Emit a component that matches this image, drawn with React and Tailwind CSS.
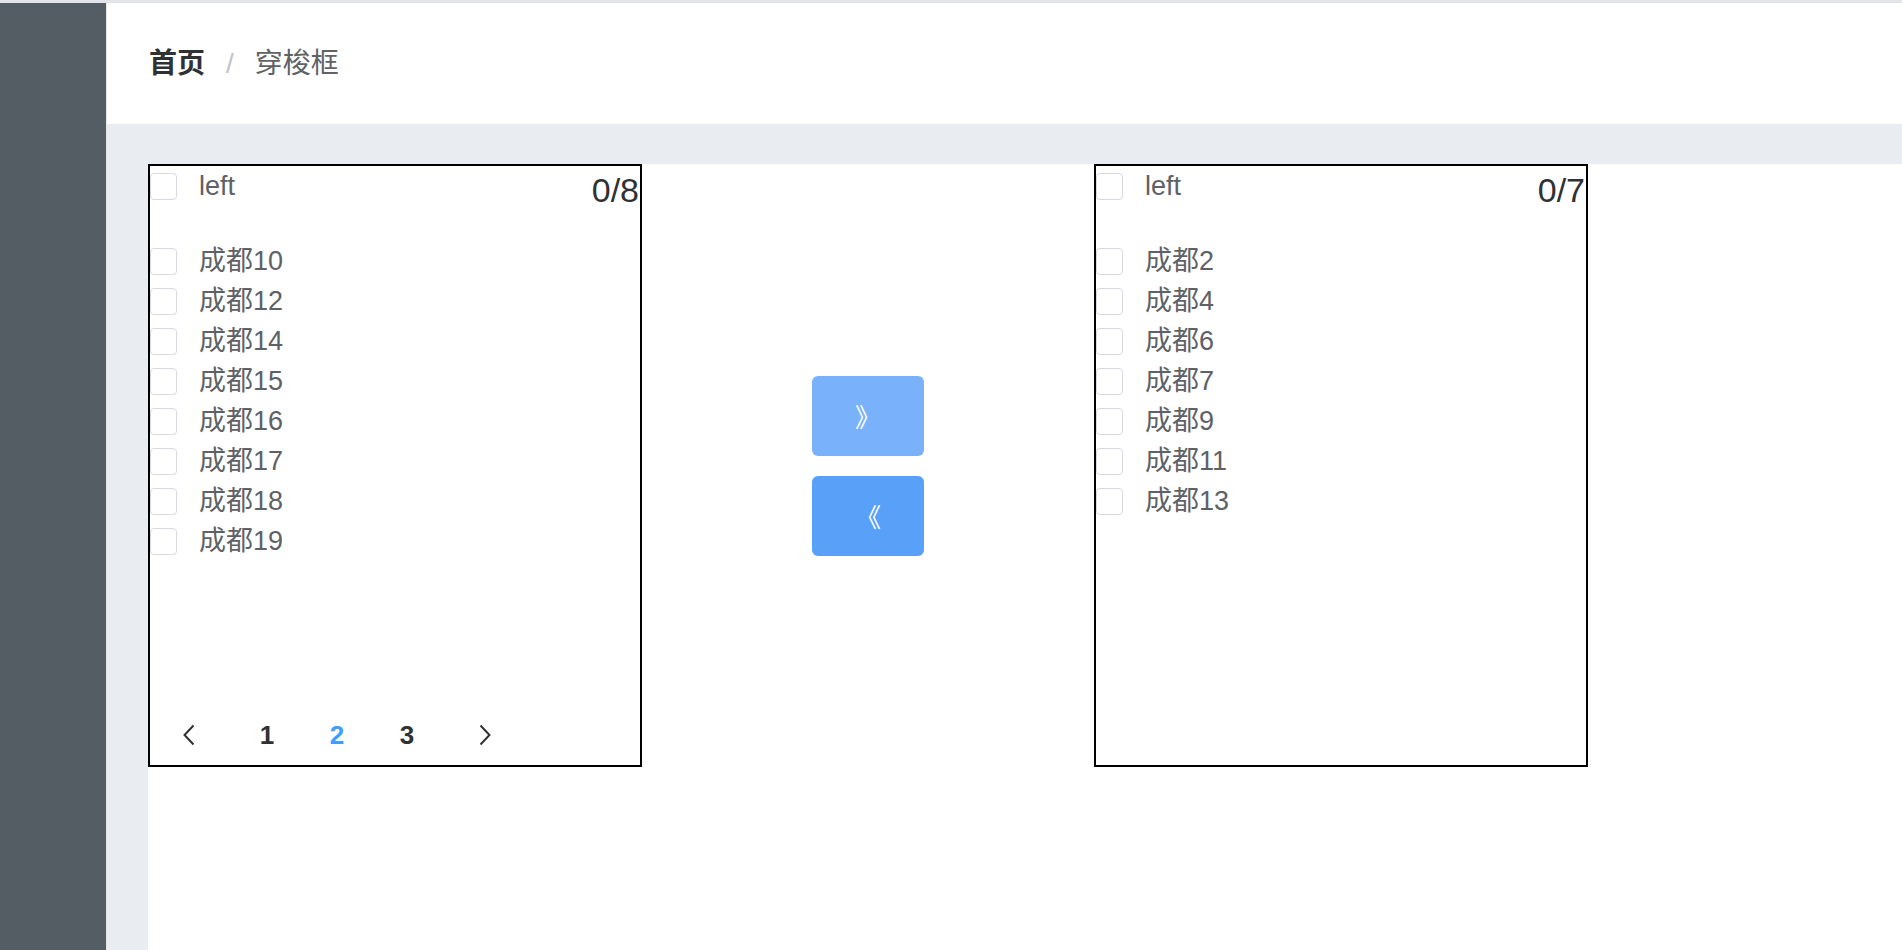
import React from "react";

const leftItems = ["成都10", "成都12", "成都14", "成都15", "成都16", "成都17", "成都18", "成都19"];
const rightItems = ["成都2", "成都4", "成都6", "成都7", "成都9", "成都11", "成都13"];

function Box() {
  return <span className="block w-[27px] h-[27px] shrink-0 rounded-[4px] border border-[#d6d9e0] bg-white" />;
}

function Chevron({ dir }) {
  return (
    <svg width="12" height="22" viewBox="0 0 12 22" fill="none">
      <polyline
        points={dir === "left" ? "10.5,1.5 1.5,11 10.5,20.5" : "1.5,1.5 10.5,11 1.5,20.5"}
        stroke="#303133"
        strokeWidth="2"
      />
    </svg>
  );
}

function Panel({ items, count, pager }) {
  return (
    <div className="w-[494px] h-[603px] shrink-0 border-2 border-black flex flex-col">
      {/* header */}
      <div className="h-[40px] flex items-center">
        <Box />
        <span className="ml-[22px] text-[27px] text-[#5e6166] leading-none">left</span>
        <span className="ml-auto pr-[1px] pt-[8px] text-[34px] text-[#303133] leading-none">{count}</span>
      </div>

      <div className="mt-[35px] flex flex-col">
        {items.map((item, i) => (
          <div key={i} className="h-[40px] flex items-center">
            <Box />
            <span className="ml-[22px] text-[27px] text-[#5e6166] leading-none">{item}</span>
          </div>
        ))}
      </div>

      {pager && (
        <div className="mt-auto mb-[10px] h-[40px] pl-[4px] flex items-center">
          <div className="w-[70px] flex justify-center">
            <Chevron dir="left" />
          </div>
          <div className="w-[70px] ml-[8px] text-center text-[26px] font-bold text-[#303133]">1</div>
          <div className="w-[70px] text-center text-[26px] font-bold text-[#409eff]">2</div>
          <div className="w-[70px] text-center text-[26px] font-bold text-[#303133]">3</div>
          <div className="w-[70px] ml-[8px] flex justify-center">
            <Chevron dir="right" />
          </div>
        </div>
      )}
    </div>
  );
}

export default function App() {
  return (
    <div className="h-[950px] w-full flex flex-col bg-white overflow-hidden font-['Liberation_Sans','Noto_Sans_CJK_SC',sans-serif]">
      <div className="h-[3px] bg-[#e2e4e9]" />
      <div className="flex flex-1 min-h-0">
        {/* sidebar */}
        <aside className="w-[107px] shrink-0 bg-[#545c64] border-r border-[#e6e6e6]" />

        <div className="flex-1 flex flex-col min-w-0">
          {/* breadcrumb */}
          <header className="h-[121px] shrink-0 flex items-center pl-[42px] bg-white text-[28px]">
            <span className="font-bold text-[#303133]">首页</span>
            <span className="mx-[21px] text-[#c0c4cc]">/</span>
            <span className="text-[#606266]">穿梭框</span>
          </header>

          <main className="flex-1 bg-[#e9ecf1] pt-[40px] pl-[41px]">
            <div className="h-full bg-white flex items-start">
              <Panel items={leftItems} count="0/8" pager />

              <div className="w-[452px] h-[603px] shrink-0 flex flex-col items-center justify-center gap-[20px]">
                <button className="w-[112px] h-[80px] rounded-[6px] bg-[#79b1fa] text-white text-[26px] font-['Noto_Sans_CJK_SC',sans-serif]">
                  》
                </button>
                <button className="w-[112px] h-[80px] rounded-[6px] bg-[#58a0f8] text-white text-[26px] font-['Noto_Sans_CJK_SC',sans-serif]">
                  《
                </button>
              </div>

              <Panel items={rightItems} count="0/7" />
            </div>
          </main>
        </div>
      </div>
    </div>
  );
}
